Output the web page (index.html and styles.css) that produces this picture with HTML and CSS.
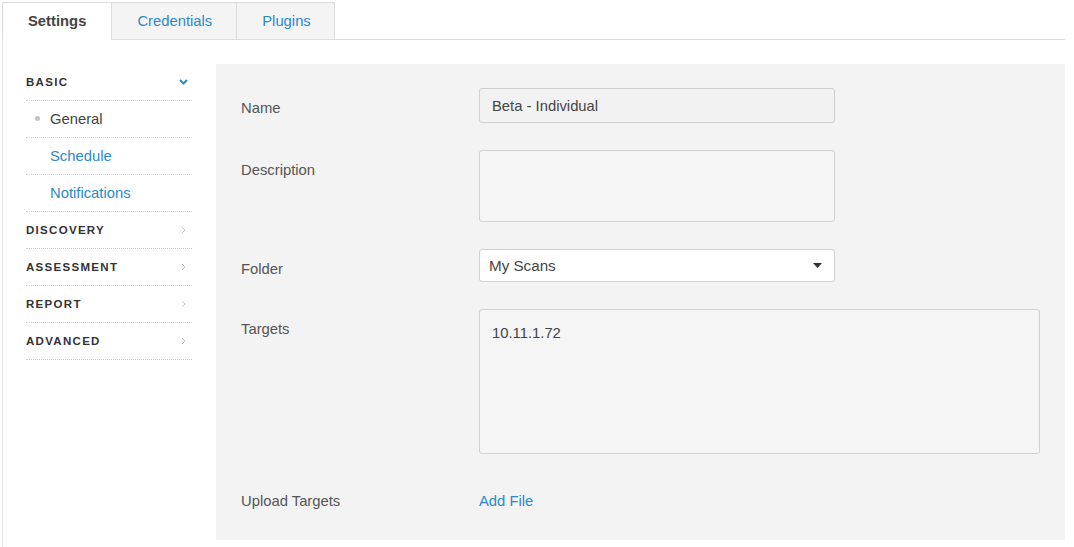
FILE: index.html
```html
<!DOCTYPE html>
<html lang="en">
<head>
<meta charset="utf-8">
<title>Scan Settings</title>
<link rel="stylesheet" href="styles.css">
</head>
<body>
<div class="page">
  <div class="tabs">
    <div class="tab active">Settings</div>
    <div class="tab">Credentials</div>
    <div class="tab last">Plugins</div>
  </div>
  <div class="content">
    <nav class="sidebar">
      <div class="side-row head">
        <span>BASIC</span>
        <svg class="chev-down" width="9" height="6" viewBox="0 0 9 6"><path d="M1 1 L4.5 4.5 L8 1" fill="none" stroke="#2a8ac8" stroke-width="2"/></svg>
      </div>
      <div class="side-row sub current"><span class="dot"></span>General</div>
      <div class="side-row sub link">Schedule</div>
      <div class="side-row sub link">Notifications</div>
      <div class="side-row head">
        <span>DISCOVERY</span>
        <svg class="chev-right" width="5" height="8" viewBox="0 0 5 8"><path d="M1 1 L4 4 L1 7" fill="none" stroke="#c8c8c8" stroke-width="1"/></svg>
      </div>
      <div class="side-row head">
        <span>ASSESSMENT</span>
        <svg class="chev-right" width="5" height="8" viewBox="0 0 5 8"><path d="M1 1 L4 4 L1 7" fill="none" stroke="#c8c8c8" stroke-width="1"/></svg>
      </div>
      <div class="side-row head">
        <span>REPORT</span>
        <svg class="chev-right" width="5" height="8" viewBox="0 0 5 8"><path d="M1 1 L4 4 L1 7" fill="none" stroke="#c8c8c8" stroke-width="1"/></svg>
      </div>
      <div class="side-row head">
        <span>ADVANCED</span>
        <svg class="chev-right" width="5" height="8" viewBox="0 0 5 8"><path d="M1 1 L4 4 L1 7" fill="none" stroke="#c8c8c8" stroke-width="1"/></svg>
      </div>
    </nav>
    <main class="panel">
      <div class="row">
        <label class="label">Name</label>
        <div class="field input-name">Beta - Individual</div>
      </div>
      <div class="row">
        <label class="label">Description</label>
        <div class="field textarea-desc"></div>
      </div>
      <div class="row">
        <label class="label">Folder</label>
        <div class="field select">
          <span>My Scans</span>
          <svg width="9" height="5" viewBox="0 0 9 5"><path d="M0 0 L9 0 L4.5 5 Z" fill="#333"/></svg>
        </div>
      </div>
      <div class="row">
        <label class="label">Targets</label>
        <div class="field textarea-targets">10.11.1.72</div>
      </div>
      <div class="row upload">
        <label class="label">Upload Targets</label>
        <a class="add-file">Add File</a>
      </div>
    </main>
  </div>
</div>
</body>
</html>
```
FILE: styles.css
```css
html, body {
  margin: 0;
  padding: 0;
  background: #fff;
}
body {
  font-family: "Liberation Sans", Arial, sans-serif;
  color: #555;
  width: 1074px;
  height: 547px;
  overflow: hidden;
}
.page {
  padding: 2px 9px 0 2px;
}
.tabs {
  display: flex;
  height: 37px;
  border-bottom: 1px solid #dcdcdc;
}
.tab {
  box-sizing: border-box;
  height: 38px;
  padding: 0 24px 0 25px;
  display: flex;
  align-items: center;
  font-size: 14.8px;
  color: #2a8ac8;
  background: #f4f4f4;
  border: 1px solid #dcdcdc;
  margin-left: -1px;
}
.tab:first-child {
  margin-left: 0;
}
.tab.active {
  background: #fff;
  color: #444;
  font-weight: bold;
  border-bottom-color: #fff;
  padding: 0 25px 0 25px;
}
.tab.last {
  padding: 0 23px 0 25px;
}
.content {
  display: flex;
  align-items: flex-start;
  border-left: 1px solid #e4e4e4;
  padding: 24px 0 0 23px;
  gap: 24px;
  height: 483px;
}
.sidebar {
  width: 166px;
  flex: none;
}
.side-row {
  height: 36px;
  border-bottom: 1px dotted #cfcfcf;
  display: flex;
  align-items: center;
  justify-content: space-between;
}
.side-row.head {
  font-size: 11.5px;
  font-weight: bold;
  color: #333;
  letter-spacing: 1.3px;
  padding-right: 4px;
}
.side-row.sub {
  justify-content: flex-start;
  font-size: 14.8px;
  padding-left: 24px;
  position: relative;
}
.side-row.current {
  color: #444;
}
.side-row.link {
  color: #2a8ac8;
}
.dot {
  position: absolute;
  left: 9px;
  top: 15px;
  width: 5px;
  height: 5px;
  border-radius: 50%;
  background: #c4c4c4;
}
.chev-right {
  margin-right: 2px;
}
.panel {
  flex: 1;
  height: 476px;
  background: #f3f3f3;
  padding: 24px 25px;
  box-sizing: border-box;
}
.row {
  display: flex;
  align-items: flex-start;
  margin-bottom: 27px;
}
.label {
  width: 238px;
  flex: none;
  font-size: 14.8px;
  line-height: 20px;
  padding-top: 10px;
  color: #555;
}
.field {
  box-sizing: border-box;
  border: 1px solid #d0d0d0;
  border-radius: 3px;
  font-size: 14.8px;
  color: #444;
}
.input-name {
  width: 356px;
  height: 35px;
  background: #f2f2f2;
  padding: 0 12px;
  display: flex;
  align-items: center;
}
.textarea-desc {
  width: 356px;
  height: 72px;
  background: #f5f5f5;
}
.select {
  width: 356px;
  height: 33px;
  background: #fff;
  padding: 0 12px 0 9px;
  display: flex;
  align-items: center;
  justify-content: space-between;
  font-size: 15.2px;
}
.textarea-targets {
  width: 561px;
  height: 145px;
  background: #f5f5f5;
  padding: 13px 12px;
  line-height: 20px;
}
.row.upload {
  margin-top: 1px;
}
.add-file {
  font-size: 14.8px;
  line-height: 20px;
  padding-top: 10px;
  color: #2a8ac8;
  cursor: pointer;
}
```
